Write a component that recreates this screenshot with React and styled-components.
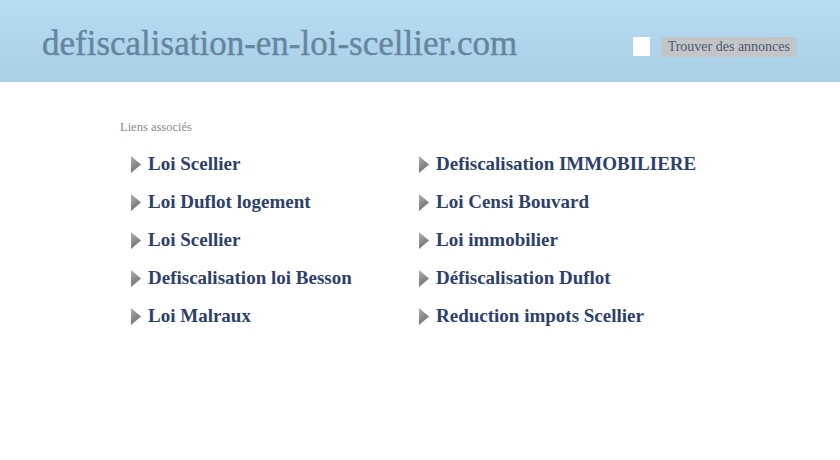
import styled, { createGlobalStyle } from "styled-components";

const Global = createGlobalStyle`
  html, body {
    margin: 0;
    padding: 0;
    background: #ffffff;
  }
  body {
    font-family: "Liberation Serif", "DejaVu Serif", serif;
  }
`;

const Header = styled.header`
  height: 82px;
  background: linear-gradient(to bottom, #b5ddf3 0%, #a9cfe7 100%);
  display: flex;
  align-items: center;
  justify-content: space-between;
  padding: 0 43px 0 42px;
  box-sizing: border-box;
`;

const Title = styled.h1`
  margin: 6px 0 0 0;
  font-family: "Liberation Serif", serif;
  font-weight: normal;
  font-size: 35px;
  color: #67869e;
  -webkit-text-stroke: 0.4px #67869e;
`;

const Search = styled.form`
  display: flex;
  align-items: center;
  gap: 11px;
  margin-top: 11px;
`;

const SearchBox = styled.div`
  width: 17px;
  height: 19px;
  background: #ffffff;
`;

const SearchButton = styled.div`
  background: #c3c6c9;
  color: #4b5b73;
  font-family: "Liberation Serif", serif;
  font-size: 14px;
  padding: 0 7px;
  height: 20px;
  line-height: 20px;
`;

const Main = styled.main`
  padding: 38px 0 0 120px;
`;

const Caption = styled.div`
  font-size: 12.5px;
  color: #8a8a8a;
  margin-bottom: 15px;
`;

const Grid = styled.div`
  display: grid;
  grid-template-columns: 288px 300px;
  grid-auto-rows: 38px;
  padding-left: 11px;
`;

const LinkItem = styled.a`
  display: flex;
  align-items: center;
  gap: 7px;
  color: #2d3f6c;
  font-weight: bold;
  font-size: 19px;
  text-decoration: none;
  height: 28px;
`;

const Arrow = () => (
  <svg width="10" height="17" viewBox="0 0 10 17">
    <defs>
      <linearGradient id="ag" x1="0" y1="0" x2="0.4" y2="1">
        <stop offset="0" stopColor="#b4b4b4" />
        <stop offset="1" stopColor="#6e6e6e" />
      </linearGradient>
    </defs>
    <polygon points="0,0 10,8.5 0,17" fill="url(#ag)" />
  </svg>
);

const left = [
  "Loi Scellier",
  "Loi Duflot logement",
  "Loi Scellier",
  "Defiscalisation loi Besson",
  "Loi Malraux",
];
const right = [
  "Defiscalisation IMMOBILIERE",
  "Loi Censi Bouvard",
  "Loi immobilier",
  "Défiscalisation Duflot",
  "Reduction impots Scellier",
];

export default function App() {
  const items = [];
  left.forEach((l, i) => {
    items.push(l, right[i]);
  });
  return (
    <>
      <Global />
      <Header>
        <Title>defiscalisation-en-loi-scellier.com</Title>
        <Search>
          <SearchBox />
          <SearchButton>Trouver des annonces</SearchButton>
        </Search>
      </Header>
      <Main>
        <Caption>Liens associés</Caption>
        <Grid>
          {items.map((t, i) => (
            <LinkItem href="#" key={i}>
              <Arrow />
              {t}
            </LinkItem>
          ))}
        </Grid>
      </Main>
    </>
  );
}
